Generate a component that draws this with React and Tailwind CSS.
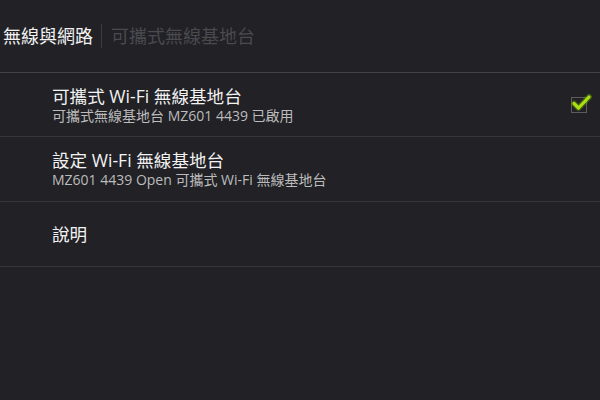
import React from "react";

const font = { fontFamily: '"Open Sans", "Noto Sans CJK TC", sans-serif' };

function Check() {
  return (
    <div className="relative w-[16px] h-[16px] border border-[#5c5c5f]">
      <svg className="absolute left-[-2px] top-[-5px]" width="22" height="20" viewBox="0 0 22 20">
        <path d="M4 10.5 L8.5 15 L19 4" fill="none" stroke="#7fb800" strokeOpacity="0.35" strokeWidth="6" strokeLinecap="round" strokeLinejoin="round" />
        <path d="M4 10.5 L8.5 15 L19 4" fill="none" stroke="#a8e010" strokeWidth="3.2" strokeLinecap="round" strokeLinejoin="round" />
      </svg>
    </div>
  );
}

function Row({ title, sub, right, h }) {
  return (
    <div className={`flex items-center border-b border-[#36363a] pl-[52px] pr-[13px] ${h}`}>
      <div className="flex-1 flex flex-col">
        <div className="text-[17.6px] leading-[22px] text-[#f2f2f2]">{title}</div>
        {sub && <div className="text-[14px] leading-[18px] text-[#bcbcbc]">{sub}</div>}
      </div>
      {right}
    </div>
  );
}

export default function App() {
  return (
    <div className="w-[600px] h-[400px] bg-[#212126] overflow-hidden" style={font}>
      <div className="h-[73px] flex items-center border-b border-[#434347] pl-[3px]">
        <span className="text-[18px] text-[#f2f2f2]">無線與網路</span>
        <span className="w-px h-[24px] bg-[#3c3c40] ml-[8px] mr-[9px]" />
        <span className="text-[18px] text-[#4a4a4f]">可攜式無線基地台</span>
      </div>
      <Row h="h-[64px]" title="可攜式 Wi-Fi 無線基地台" sub="可攜式無線基地台 MZ601 4439 已啟用" right={<Check />} />
      <Row h="h-[65px]" title="設定 Wi-Fi 無線基地台" sub="MZ601 4439 Open 可攜式 Wi-Fi 無線基地台" />
      <Row h="h-[65px]" title="說明" />
    </div>
  );
}
